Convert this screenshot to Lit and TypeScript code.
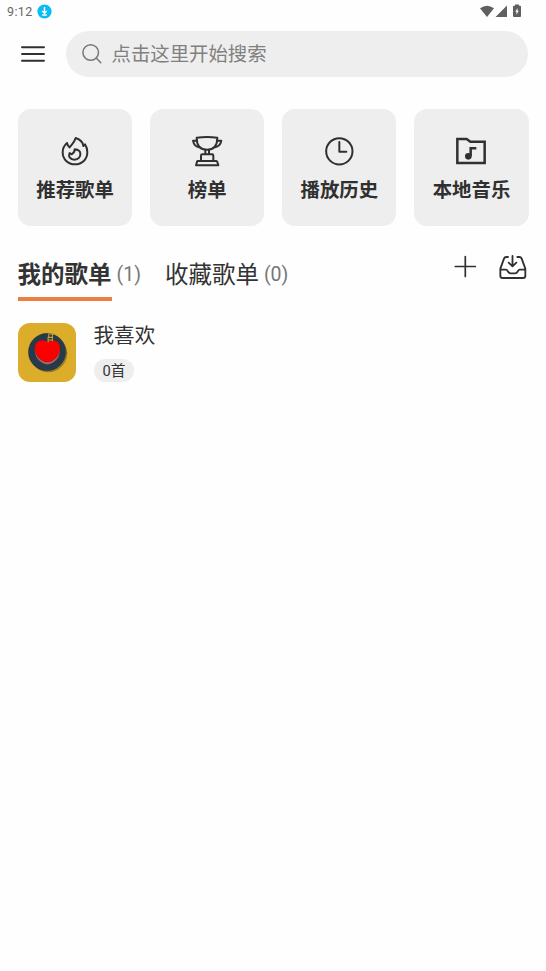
import { LitElement, html, css, svg } from "lit";
import { customElement, property } from "lit/decorators.js";

const flame = svg`<svg width="28" height="30" viewBox="153 108 84 90">
  <path d="M197 114C194 126 186 133 179 142C175 139 172 135 171 129C163 136 158 146 158 157C158 178 174 193 195 193C216 193 232 178 232 157C232 148 230 140 225 133L220 138C219 127 209 118 197 114Z"/>
  <path d="M194 148C195 156 190 159 185 163L179 159C174 170 181 179 193 179C205 179 212 171 211 161C211 154 203 149 194 148Z"/></svg>`;
const trophy = svg`<svg width="32" height="32" viewBox="147 105 96 96">
  <path d="M164 113Q195 109 226 113C226 135 216 149 195 149C174 149 164 135 164 113Z"/>
  <path d="M164 122H153C155 133 162 140 171 142M226 122H238C236 133 229 140 219 142"/>
  <path d="M190 150V162M201 150V162M177 182V167Q177 163 181 163H210Q214 163 214 167V182M167 183H223Q225 183 226 186L229 196H162L165 186Q165 183 167 183Z"/></svg>`;
const clock = svg`<svg width="30" height="30" viewBox="151 108 90 90">
  <circle cx="197" cy="154" r="39.5"/><path d="M197 126V155H218"/></svg>`;
const folder = svg`<svg width="30" height="28" viewBox="151 111 90 84">
  <path class="bold" d="M155 117H183L194 125H237V189H155Z"/>
  <circle class="dot" cx="188" cy="169" r="10"/>
  <path class="bold" d="M195 168V145H212"/></svg>`;

@customElement("status-bar")
class StatusBar extends LitElement {
  static styles = css`
    :host { display: flex; align-items: center; height: 22px; padding: 0 24px 0 7px; color: #666;
      font: 12.5px Roboto, sans-serif; letter-spacing: .35px; }
    svg { display: block; }
    .dl { margin-left: 4px; }
    .right { margin-left: auto; margin-top: -1px; }
  `;
  render() {
    return html`<span>9:12</span>
      <svg class="dl" width="15" height="15" viewBox="0 0 15 15"><circle cx="7.5" cy="7.5" r="7.1" fill="#08bdf5"/><path d="M7.5 3V9M5.2 7L7.5 9.3L9.8 7M5.2 11H9.8" fill="none" stroke="#fff" stroke-width="1.4"/></svg>
      <svg class="right" width="42" height="14" viewBox="0 0 42 14" fill="#606060">
        <path d="M0 4.2Q7 -.8 14 4.2L7 13Z"/><path d="M15.5 13L27 1.5V13Z"/>
        <path d="M33 2.5Q33 1.8 34 1.8H35V.6H39V1.8H40Q41 1.8 41 2.5V12.3Q41 13 40 13H34Q33 13 33 12.3Z"/><path d="M37.5 4L35.3 7.8H36.5V10.8L38.7 6.8H37.5Z" fill="#fff"/>
      </svg>`;
  }
}

@customElement("nav-card")
class NavCard extends LitElement {
  @property() label = "";
  @property({ attribute: false }) icon: unknown;
  static styles = css`
    :host { display: flex; flex-direction: column; align-items: center; height: 116.5px; box-sizing: border-box;
      padding-top: 25px; border-radius: 13px; background: #eee; color: #303030; }
    .icon { height: 34px; display: flex; align-items: center; justify-content: center; }
    svg { fill: none; stroke: #303030; stroke-width: 6; stroke-linejoin: round; stroke-linecap: round; display: block; }
    .bold { stroke-width: 7.5; stroke-linecap: butt; stroke-linejoin: miter; }
    .dot { fill: #303030; stroke: none; }
    .label { margin: 7.5px 0 0 .6px; font-size: 19.4px; line-height: 29px; font-weight: 700; white-space: nowrap; }
  `;
  render() {
    return html`<div class="icon">${this.icon}</div><div class="label">${this.label}</div>`;
  }
}

@customElement("app-root")
class AppRoot extends LitElement {
  static styles = css`
    :host { display: block; height: 971px; overflow: hidden; background: #fefefe; color: #333;
      font-family: Roboto, "Noto Sans CJK SC", sans-serif; }
    svg { display: block; fill: none; stroke: #303030; stroke-linecap: round; stroke-linejoin: round; }
    .top { display: flex; align-items: center; padding: 9px 18px 0 20.5px; }
    .search { flex: 1; margin-left: 21px; height: 46px; border-radius: 23px; background: #eee; display: flex;
      align-items: center; padding-left: 15px; gap: 9px; color: #808080; font-size: 19.4px; }
    .search span { line-height: 30px; padding-top: 2px; }
    .search svg { stroke: #777; }
    .cards { display: grid; grid-template-columns: repeat(4, 1fr); gap: 17.6px; padding: 32px 17.5px 0; }
    .tabs { display: flex; align-items: flex-start; padding: 30px 18.6px 0 17.5px; height: 45.5px; }
    .tab { display: flex; align-items: center; line-height: 38px; font-size: 23.5px; }
    .name { height: 45px; box-sizing: border-box; }
    .active .name { font-weight: 700; border-bottom: 4px solid #e97f42; }
    .count { height: 45px; margin-left: 5px; font-size: 19.5px; color: #777; }
    .tab + .tab { margin-left: 24px; }
    .tools { margin: -.5px 0 0 auto; display: flex; gap: 22px; }
    .row { display: flex; padding: 22px 17.5px 0; gap: 17.5px; }
    .cover { border-radius: 12px; overflow: hidden; width: 58.5px; height: 58.5px; background: #dbad2b; }
    .title { font-size: 20.6px; line-height: 26px; }
    .badge { display: inline-block; margin-top: 10px; height: 23px; line-height: 24px; border-radius: 12px;
      padding: 0 9px; background: #eee; font-size: 14.7px; }
  `;
  render() {
    return html`
      <status-bar></status-bar>
      <div class="top">
        <svg width="24" height="18" viewBox="0 0 24 18" stroke-width="1.9"><path d="M1 2.3H23M1 9H23M1 15.7H23"/></svg>
        <div class="search">
          <svg width="22" height="22" viewBox="0 0 22 22" stroke-width="1.5"><circle cx="9.7" cy="9.5" r="7.8"/><path d="M15.2 15L19.8 19.8"/></svg>
          <span>点击这里开始搜索</span>
        </div>
      </div>
      <div class="cards">
        <nav-card label="推荐歌单" .icon=${flame}></nav-card>
        <nav-card label="榜单" .icon=${trophy}></nav-card>
        <nav-card label="播放历史" .icon=${clock}></nav-card>
        <nav-card label="本地音乐" .icon=${folder}></nav-card>
      </div>
      <div class="tabs">
        <div class="tab active"><span class="name">我的歌单</span><span class="count">(1)</span></div>
        <div class="tab"><span class="name">收藏歌单</span><span class="count">(0)</span></div>
        <div class="tools">
          <svg width="24" height="24" viewBox="0 0 24 24" stroke-width="1.7"><path d="M2.3 11.5H22.3M12.3 1.5V21.5"/></svg>
          <svg width="28" height="26" viewBox="179 29 84 78" stroke-width="5.5">
            <path d="M206 35H201Q196 35 194 40L183 70V91Q183 98 190 98H251Q258 98 258 91V70L247 40Q245 35 240 35H234M183 73H200C206 73 205 84 214 84H227C236 84 235 73 241 73H258M219.5 32V62M208 52L219.5 63L231 52"/></svg>
        </div>
      </div>
      <div class="row">
        <div class="cover">
          <svg width="58.5" height="58.5" viewBox="0 0 175 175" stroke="none">
            <circle cx="91" cy="91" r="55" fill="#b18b26"/><circle cx="87" cy="87" r="56" fill="#263a49"/>
            <path d="M88 57C66 46 49 58 50 82C50 110 76 124 88 124C100 124 126 110 126 82C127 58 110 46 88 57Z" fill="#b06a6e"/>
            <path d="M88 55C68 46 50 54 50 76C51 104 76 117 88 117C100 117 125 104 126 76C126 54 108 46 88 55Z" fill="#fc0000"/>
            <path d="M90 57V42M103 53V32M92 33H106M90 43H104M90 51H103M92 33V42" stroke="#c4a33a" stroke-width="3"/>
          </svg>
        </div>
        <div><div class="title">我喜欢</div><span class="badge">0首</span></div>
      </div>`;
  }
}
